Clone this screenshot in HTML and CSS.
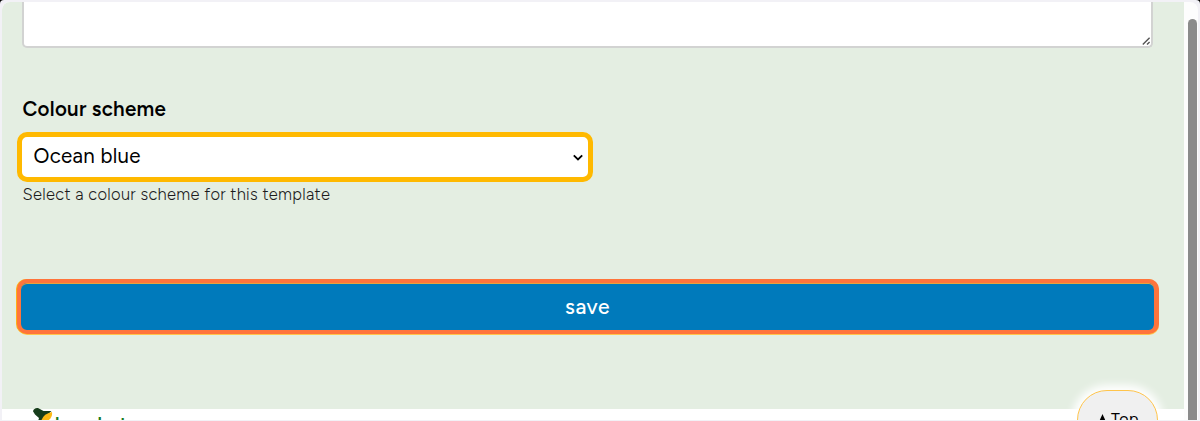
FILE: index.html
```html
<!DOCTYPE html>
<html lang="en">
<head>
<meta charset="utf-8">
<title>Colour scheme</title>
<link rel="stylesheet" href="styles.css">
</head>
<body>
<div class="window">
  <div class="viewport">
    <main class="page">
      <form class="form">
        <div class="textarea">
          <svg class="grip" width="9" height="9" viewBox="0 0 9 9"><path d="M.8 7.6 7.6.8M5 7.6l2.6-2.6" stroke="#555" stroke-width="1.4" fill="none"/></svg>
        </div>
        <div class="label">Colour scheme</div>
        <div class="select">
          <span class="value">Ocean blue</span>
          <svg class="chevron" width="10" height="8" viewBox="0 0 10 8"><path d="M.8 1.3 5 5.5l4.2-4.2" stroke="#000" stroke-width="1.8" fill="none"/></svg>
        </div>
        <div class="help">Select a colour scheme for this template</div>
        <div class="save">save</div>
      </form>
      <footer class="footer">
        <svg class="logo" width="22" height="20" viewBox="0 0 22 20"><path d="M0 3.2Q1-.2 5 0L10.500 3 18.500 3 12 9 9 15H4.500L6 10 2 6.500Z" fill="#173d1b"/><path d="M19 4Q20 11 12 14H8Q9.500 6 19 4Z" fill="#fdb913"/></svg>
        <span class="brand">learnbot</span>
      </footer>
    </main>
    <div class="track"><div class="thumb"></div></div>
    <div class="top"><svg width="9" height="10" viewBox="0 0 9 10"><path d="M4.5 0 9 10H0Z"/></svg><span>Top</span></div>
  </div>
</div>
</body>
</html>
```
FILE: styles.css
```css
* { box-sizing: border-box; }
body { margin: 0; background: #000; font-family: "Figtree", Inter, sans-serif; color: #000; }
.window { width: 1200px; height: 421px; padding: 2px 2px 1px; background: #f2f1f6; border-radius: 4px 4px 0 0; overflow: hidden; }
.viewport { position: relative; display: flex; height: 418px; background: #fdfdfd; border-radius: 8px 8px 0 0; overflow: hidden; }
.page { width: 1182px; background: #fff; }
.form { height: 407px; padding: 0 25px 0 14px; background: #e4eee2; }
.textarea { width: 1131px; height: 46px; margin-left: 6px; border: 2px solid #d2d3d2; border-top: 0; border-radius: 0 0 5px 5px; background: #fff; display: flex; justify-content: flex-end; align-items: flex-end; }
.grip { display: block; }
.label { margin: 49px 0 0 6.5px; height: 24px; line-height: 24px; font-size: 20.5px; font-weight: 600; letter-spacing: .27px; }
.select { width: 576px; height: 50px; margin: 11px 0 0 1px; border: 5px solid #ffb900; border-radius: 10px; background: #fff; display: flex; align-items: center; justify-content: space-between; padding: 0 5px 0 11.5px; font-size: 20.5px; letter-spacing: .3px; }
.value { margin-top: -2px; }
.chevron { margin-top: 1px; }
.help { margin: 2px 0 0 6.5px; height: 20px; line-height: 20px; font-size: 16.5px; font-weight: 300; letter-spacing: .3px; color: #1c1c1c; white-space: nowrap; }
.save { width: 1142px; height: 55px; margin: 75px 0 0 1px; border: 4px solid #ff743b; border-right-width: 5px; border-radius: 10px; background: #007abb; box-shadow: inset 0 1px 0 #e7a33c, -1px 0 0 #ffb014, 0 1px 0 #ffc44b; color: #fff; display: flex; align-items: center; justify-content: center; font-size: 21px; font-weight: 500; letter-spacing: .5px; padding-bottom: 1px; }
.footer { height: 11px; padding-left: 31px; display: flex; }
.logo { margin-top: -1px; flex: none; }
.brand { margin-top: 4px; font-size: 19px; line-height: 24px; font-weight: 600; color: #167a1c; }
.track { width: 14px; padding: 17px 1px 0 4px; }
.thumb { width: 9px; height: 410px; border-radius: 5px 5px 0 0; background: #8b8b8b; }
.top { position: absolute; left: 1075px; top: 388px; width: 81px; height: 60px; border: 1px solid #ffc44b; border-radius: 30px; background: #f0f0f0; box-shadow: 0 0 9px 5px #fff; display: flex; justify-content: center; gap: 4px; padding: 18px 0 0 2px; font-size: 16px; line-height: 20px; letter-spacing: .4px; }
.top svg { margin-top: 5px; }
```
